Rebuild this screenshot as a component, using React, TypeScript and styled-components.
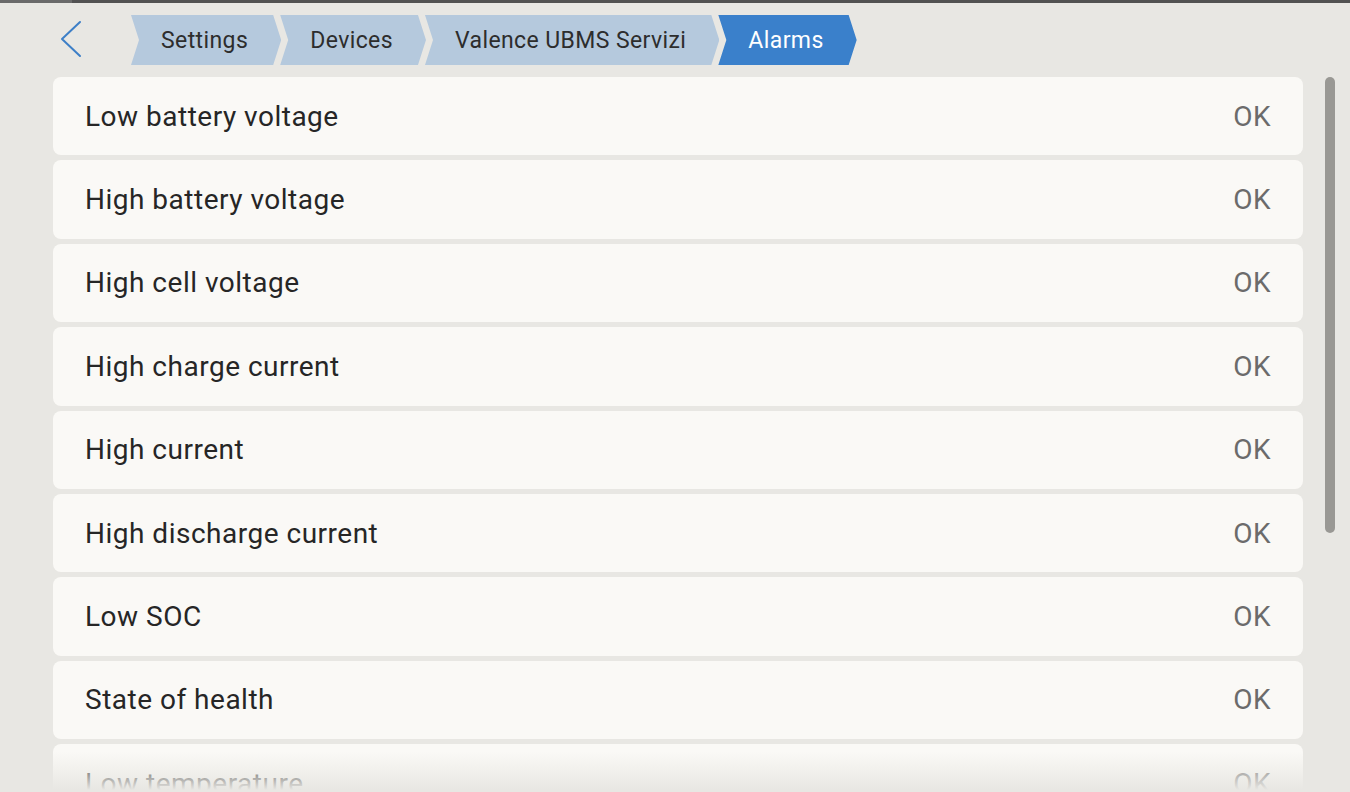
import React from "react";
import styled, { createGlobalStyle } from "styled-components";

const GlobalStyle = createGlobalStyle`
  html, body {
    margin: 0;
    padding: 0;
    background: #e8e7e3;
    font-family: Roboto, "Noto Sans", "Liberation Sans", sans-serif;
    overflow: hidden;
  }
`;

interface Alarm {
  name: string;
  status: string;
}

const alarms: Alarm[] = [
  { name: "Low battery voltage", status: "OK" },
  { name: "High battery voltage", status: "OK" },
  { name: "High cell voltage", status: "OK" },
  { name: "High charge current", status: "OK" },
  { name: "High current", status: "OK" },
  { name: "High discharge current", status: "OK" },
  { name: "Low SOC", status: "OK" },
  { name: "State of health", status: "OK" },
  { name: "Low temperature", status: "OK" },
  { name: "High temperature", status: "OK" },
];

const crumbs = ["Settings", "Devices", "Valence UBMS Servizi", "Alarms"];

export default function App() {
  return (
    <Screen>
      <GlobalStyle />
      <TopEdge />
      <Header>
        <BackButton aria-label="Back">
          <svg width="22" height="40" viewBox="0 0 22 40">
            <polyline
              points="20,2 2,19 20,36"
              fill="none"
              stroke="#3d7fc7"
              strokeWidth="2"
              strokeLinecap="round"
              strokeLinejoin="round"
            />
          </svg>
        </BackButton>
        <Crumbs>
          {crumbs.map((c, i) => (
            <Crumb key={c} $active={i === crumbs.length - 1}>
              {c}
            </Crumb>
          ))}
        </Crumbs>
      </Header>
      <Body>
        <List>
          {alarms.map((a) => (
            <Row key={a.name}>
              <Label>{a.name}</Label>
              <Status>{a.status}</Status>
            </Row>
          ))}
        </List>
        <ScrollTrack>
          <ScrollThumb />
        </ScrollTrack>
        <Fade />
      </Body>
    </Screen>
  );
}

const Screen = styled.div`
  width: 1350px;
  height: 792px;
  display: flex;
  flex-direction: column;
  overflow: hidden;
  background: #e8e7e3;
`;

const TopEdge = styled.div`
  height: 3px;
  flex: none;
  background: linear-gradient(to right, #6a6a6a 0 72px, #525252 72px);
`;

const Header = styled.div`
  height: 74px;
  flex: none;
  display: flex;
  align-items: flex-start;
  padding: 12px 0 0 60px;
  box-sizing: border-box;
`;

const BackButton = styled.div`
  width: 24px;
  height: 50px;
  display: flex;
  align-items: center;
  margin-right: 47px;
  cursor: pointer;
`;

const Crumbs = styled.div`
  display: flex;
`;

const Crumb = styled.div<{ $active?: boolean }>`
  height: 50px;
  display: flex;
  align-items: center;
  padding: 0 33px 0 30px;
  margin-left: -1px;
  font-size: 23px;
  letter-spacing: 0.4px;
  color: ${(p) => (p.$active ? "#ffffff" : "#2d2d2d")};
  background: ${(p) => (p.$active ? "#3a80cb" : "#b5c9dd")};
  clip-path: polygon(
    0 0,
    calc(100% - 8px) 0,
    100% 50%,
    calc(100% - 8px) 100%,
    0 100%,
    8px 50%
  );
  &:first-child {
    margin-left: 0;
  }
`;

const Body = styled.div`
  position: relative;
  flex: 1;
  display: flex;
  overflow: hidden;
`;

const List = styled.div`
  width: 1250px;
  margin-left: 53px;
  display: flex;
  flex-direction: column;
  gap: 5px;
`;

const Row = styled.div`
  height: 78.4px;
  flex: none;
  display: flex;
  align-items: center;
  justify-content: space-between;
  padding: 0 32px;
  box-sizing: border-box;
  background: #faf9f6;
  border-radius: 8px;
`;

const Label = styled.span`
  font-size: 28px;
  letter-spacing: 0.5px;
  color: #262626;
`;

const Status = styled.span`
  font-size: 28px;
  letter-spacing: 0.5px;
  color: #6b6b6b;
`;

const ScrollTrack = styled.div`
  margin-left: 22px;
  width: 10px;
`;

const ScrollThumb = styled.div`
  height: 456px;
  border-radius: 5px;
  background: #999894;
`;

const Fade = styled.div`
  position: absolute;
  left: 0;
  right: 0;
  bottom: 0;
  height: 40px;
  background: linear-gradient(to bottom, rgba(232, 231, 227, 0), #e8e7e3 95%);
  pointer-events: none;
`;
